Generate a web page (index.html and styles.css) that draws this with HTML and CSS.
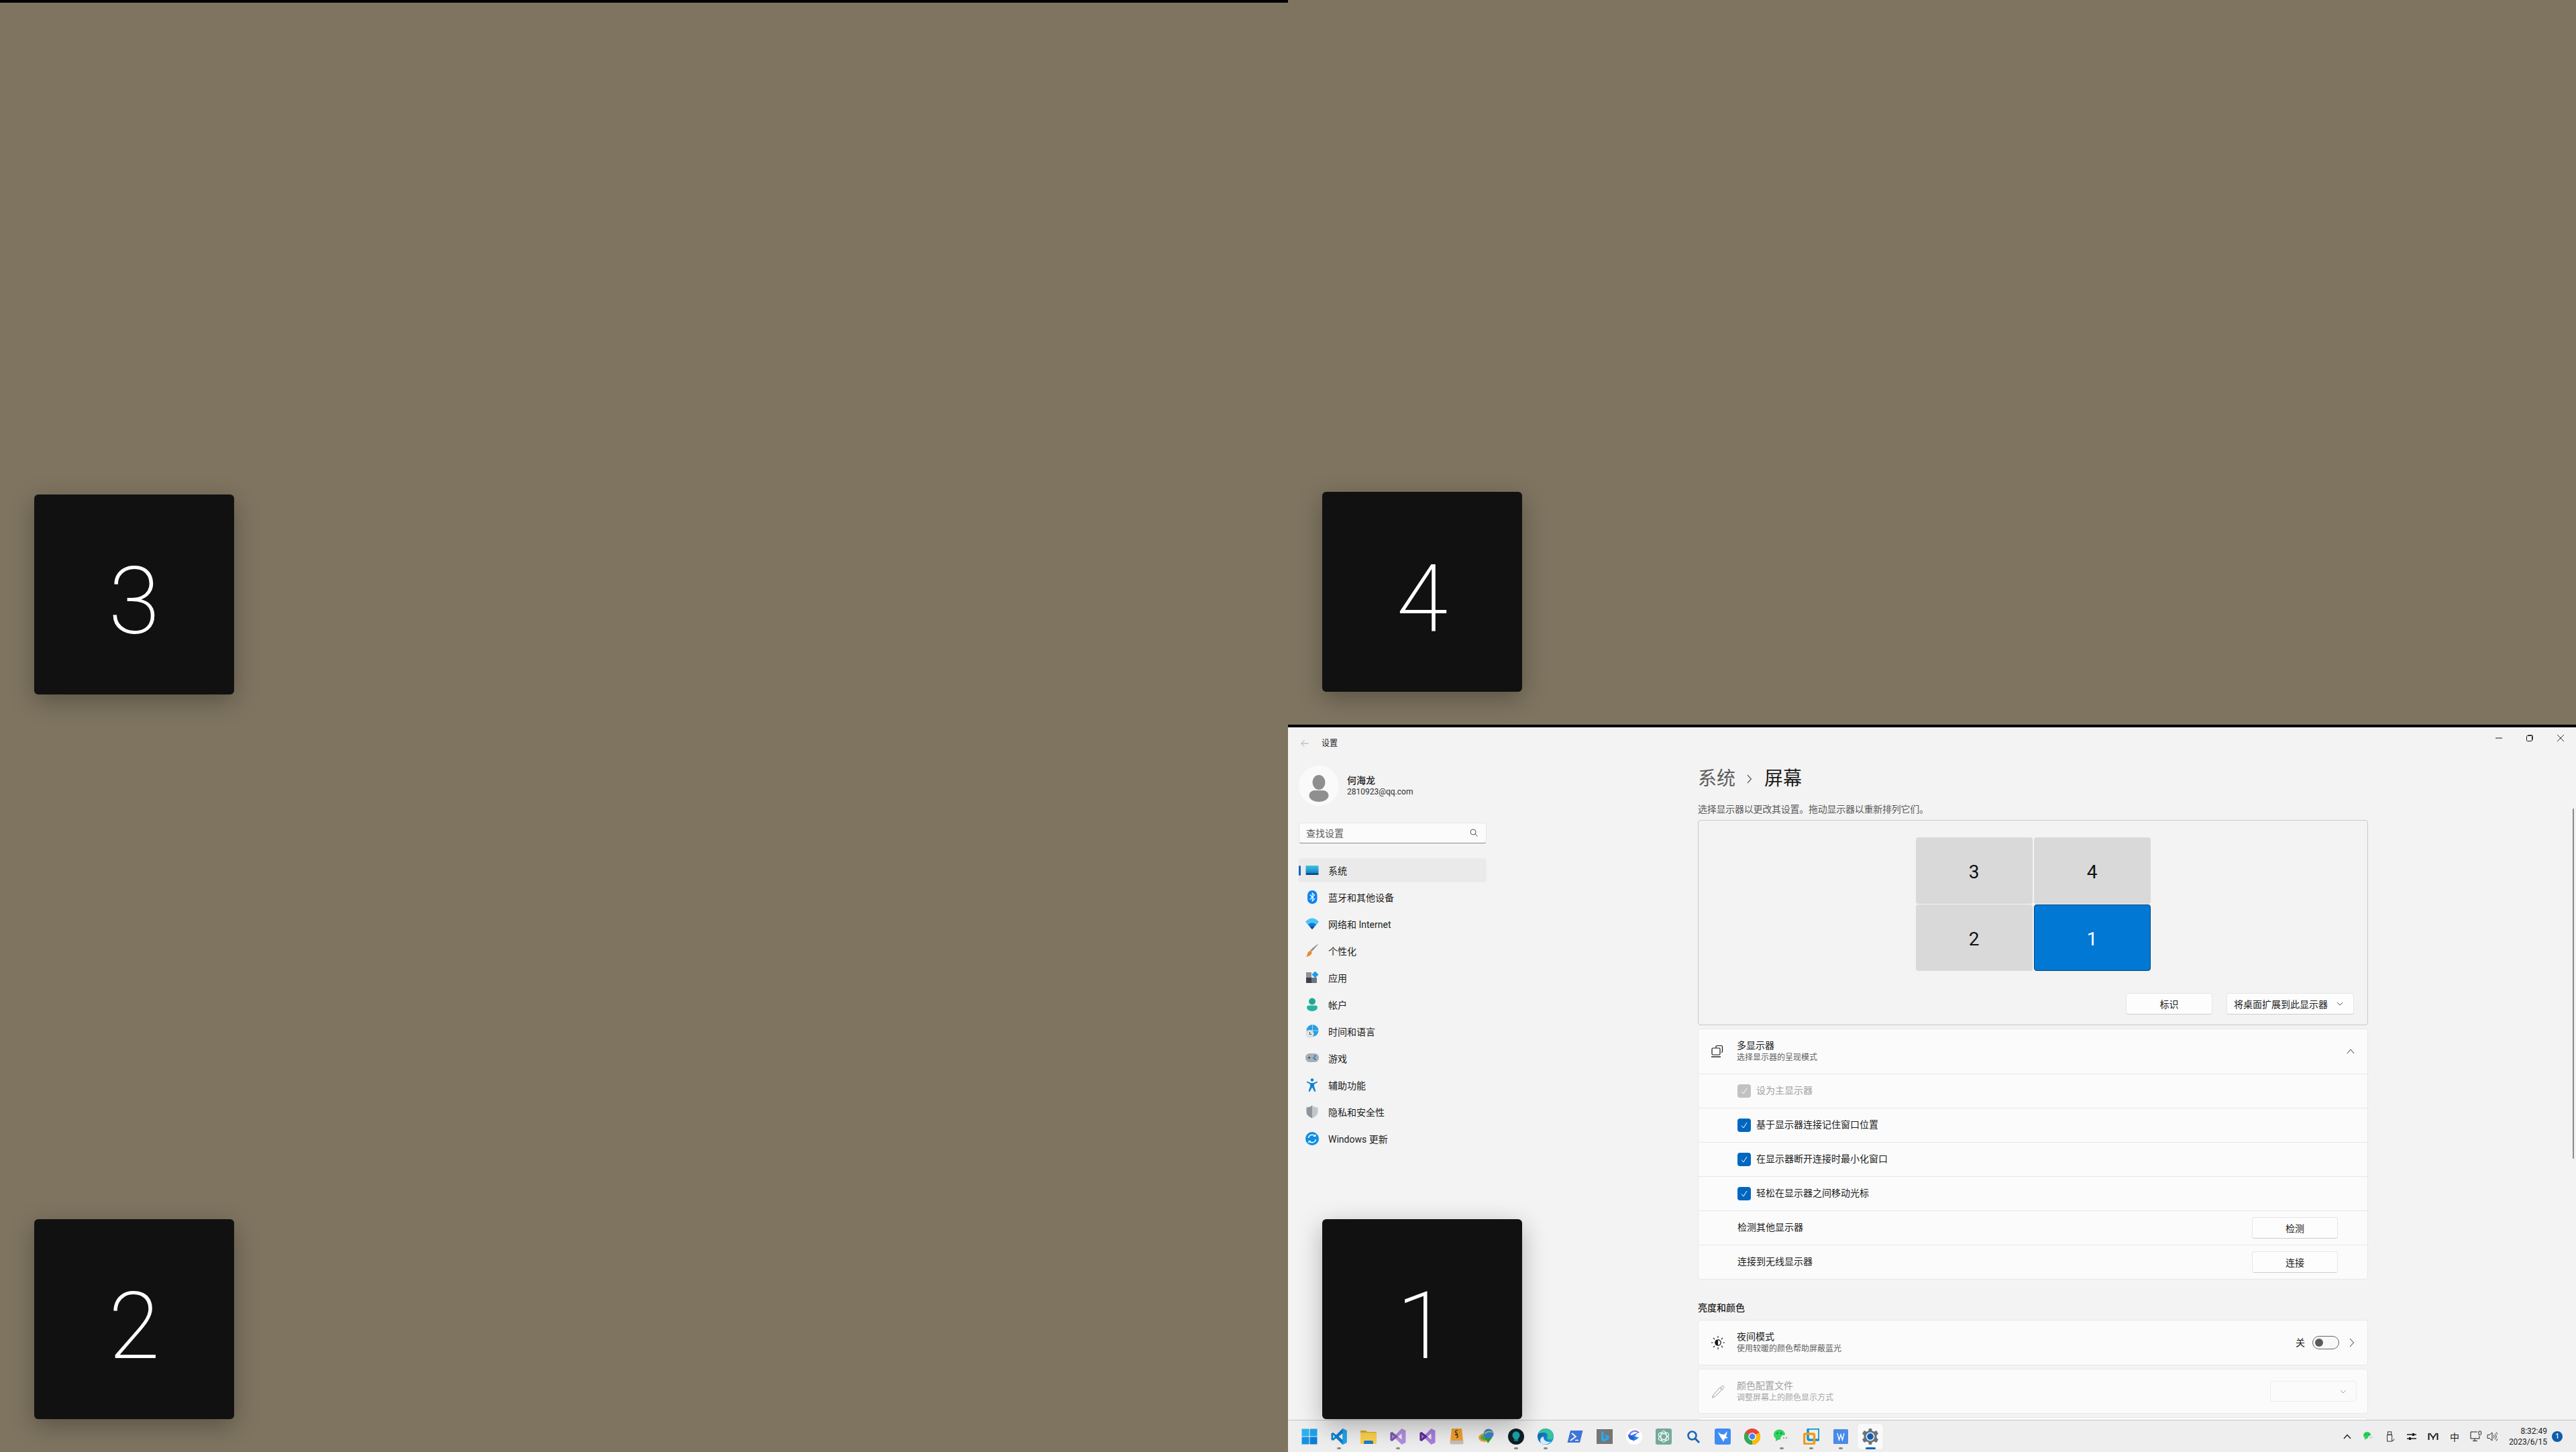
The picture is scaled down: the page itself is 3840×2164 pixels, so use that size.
FILE: index.html
```html
<!DOCTYPE html>
<html lang="zh-CN">
<head>
<meta charset="utf-8">
<title>设置</title>
<link rel="stylesheet" href="styles.css">
</head>
<body>
<div class="desktop">
  <div class="screen-left"></div>
  <div class="screen-right">
    <div class="wall-top"></div>
    <div class="window">
      <div class="titlebar">
        <svg class="back" viewBox="0 0 12 12"><path d="M11.5 6H1M5.5 1.2 .8 6l4.7 4.8" fill="none" stroke="#a8a8a8" stroke-width="1"/></svg>
        <span class="app-title">设置</span>
        <div class="controls">
          <svg viewBox="0 0 10 10"><path d="M0 5h10" stroke="#1b1b1b" stroke-width="1"/></svg>
          <svg viewBox="0 0 10 10"><rect x=".5" y="1.5" width="8" height="8" rx="1.2" fill="none" stroke="#1b1b1b"/><path d="M2.5 .5H8a1.5 1.5 0 0 1 1.5 1.5v5.5" fill="none" stroke="#1b1b1b" stroke-width=".8"/></svg>
          <svg viewBox="0 0 10 10"><path d="M0 0 10 10M10 0 0 10" stroke="#1b1b1b" stroke-width=".9"/></svg>
        </div>
      </div>
      <div class="body">
        <aside class="sidebar">
          <div class="profile">
            <div class="avatar"><svg viewBox="0 0 60 60"><ellipse cx="30" cy="25" rx="9.5" ry="11" fill="#8f8f8f"/><path d="M15.5 45c0-5 4-8 8-8h13c4 0 8 3 8 8 0 5-7 9-14.500 9S15.500 50 15.500 45z" fill="#8f8f8f"/></svg></div>
            <div class="who"><div class="name">何海龙</div><div class="mail">2810923@qq.com</div></div>
          </div>
          <div class="search"><span>查找设置</span><svg viewBox="0 0 12 12"><circle cx="5" cy="5" r="4" fill="none" stroke="#555" stroke-width="1"/><path d="M8 8l3.500 3.500" stroke="#555" stroke-width="1"/></svg></div>
          <nav class="nav">
            <div class="item active"><svg viewBox="0 0 20 20"><defs><linearGradient id="sys" x1="0" y1="0" x2="0" y2="1"><stop offset="0" stop-color="#3cc4e4"/><stop offset="1" stop-color="#1584c8"/></linearGradient></defs><rect x=".5" y="3" width="19" height="11" rx="1" fill="url(#sys)"/><path d="M.5 14h19v2a1 1 0 0 1-1 1H1.500a1 1 0 0 1-1-1z" fill="#0f4d8c"/></svg><span>系统</span></div>
            <div class="item"><svg viewBox="0 0 20 20"><rect x="3" y="0" width="14.500" height="20" rx="7" fill="#0b84f0"/><path d="M6.500 6.500 13.500 13 10.200 16V4l3.300 3L6.500 13.500" fill="none" stroke="#fff" stroke-width="1.100"/></svg><span>蓝牙和其他设备</span></div>
            <div class="item"><svg viewBox="0 0 20 20"><path d="M0 7C5-.5 15-.5 20 7l-10 11z" fill="#4fc3f7"/><path d="M3.800 11C7 7.500 13 7.500 16.200 11L10 18z" fill="#0f7ad8"/><path d="M6.800 14.500C8.500 13 11.500 13 13.200 14.500L10 18z" fill="#0a4f9e"/></svg><span>网络和 Internet</span></div>
            <div class="item"><svg viewBox="0 0 20 20"><path d="M19.500 0 9.500 11l-2.500-1.500C11 5.500 16 1 19.500 0z" fill="#8a8f96"/><path d="M7 10l2.800 1.800C9.500 15.500 5.500 19 .5 19c2.500-1.500 2-4 3-6 .6-1.400 2-2.500 3.500-3z" fill="#f08a24"/></svg><span>个性化</span></div>
            <div class="item"><svg viewBox="0 0 20 20"><rect x="1" y="2" width="8" height="8" fill="#8d939a"/><rect x="1" y="10" width="8" height="8" fill="#3c4046"/><rect x="9" y="10" width="8" height="8" fill="#6e747b"/><path d="M14.500 .5 19.500 5.500l-5 5-5-5z" fill="#1a9cf0"/></svg><span>应用</span></div>
            <div class="item"><svg viewBox="0 0 20 20"><circle cx="10" cy="5.500" r="5" fill="#21a88f"/><path d="M2 14.500c0-2 1.500-3 3-3h10c1.500 0 3 1 3 3 0 3-3.500 5.500-8 5.500s-8-2.500-8-5.500z" fill="#24b5a0"/></svg><span>帐户</span></div>
            <div class="item"><svg viewBox="0 0 20 20"><circle cx="10.500" cy="9" r="9" fill="#2a9fe0"/><path d="M1.500 9h18M10.500 0v18" stroke="#bfe6f8" stroke-width=".8"/><circle cx="6.500" cy="14" r="6" fill="#dfe0e2"/><path d="M6.500 11v3.500H9" fill="none" stroke="#444" stroke-width="1"/></svg><span>时间和语言</span></div>
            <div class="item"><svg viewBox="0 0 20 20"><rect x="0" y="3" width="20" height="13" rx="6" fill="#a9afb6"/><path d="M3.500 9.500h4M5.500 7.500v4" stroke="#444" stroke-width="1"/><circle cx="14.500" cy="6.800" r="1.200" fill="#1570c4"/><circle cx="12.500" cy="9.500" r="1.200" fill="#1570c4"/><circle cx="14.500" cy="11.800" r="1.200" fill="#1570c4"/></svg><span>游戏</span></div>
            <div class="item"><svg viewBox="0 0 20 20"><circle cx="10" cy="2.500" r="2.300" fill="#1282d6"/><path d="M2.500 4.500 8 7h4l5.500-2.500.6 1.600L13 9v3l2.500 7.500-2 .5L10 13.500 6.500 20l-2-.5L7 12V9L1.900 6.100z" fill="#1282d6"/></svg><span>辅助功能</span></div>
            <div class="item"><svg viewBox="0 0 20 20"><defs><linearGradient id="shd" x1="0" y1="0" x2="1" y2="0"><stop offset=".5" stop-color="#8f959c"/><stop offset=".5" stop-color="#c3c7cb"/></linearGradient></defs><path d="M10 .5c2.500 2 5.500 3 8.500 3v7c0 4-3.500 7-8.500 9-5-2-8.500-5-8.500-9v-7c3 0 6-1 8.500-3z" fill="url(#shd)"/></svg><span>隐私和安全性</span></div>
            <div class="item"><svg viewBox="0 0 20 20"><circle cx="10" cy="10" r="10" fill="#0f8fe0"/><path d="M4.500 9a5.600 5.600 0 0 1 10-2.500M15.500 11a5.600 5.600 0 0 1-10 2.500" fill="none" stroke="#fff" stroke-width="1.500"/><path d="M15.500 3v4h-4zM4.500 17v-4h4z" fill="#fff"/></svg><span>Windows 更新</span></div>
          </nav>
        </aside>
        <main class="main">
          <h1 class="crumb"><span class="crumb-dim">系统</span><svg viewBox="0 0 8 14"><path d="M1 1l5.500 6L1 13" fill="none" stroke="#5c5c5c" stroke-width="1.200"/></svg><span>屏幕</span></h1>
          <p class="lead">选择显示器以更改其设置。拖动显示器以重新排列它们。</p>
          <section class="arrange">
            <div class="monitors">
              <div class="mon">3</div>
              <div class="mon">4</div>
              <div class="mon">2</div>
              <div class="mon sel">1</div>
            </div>
            <div class="arr-actions">
              <button class="btn btn-id">标识</button>
              <button class="btn btn-drop"><span>将桌面扩展到此显示器</span><svg class="chev" viewBox="0 0 10 6"><path d="M1 1l4 4 4-4" fill="none" stroke="#555" stroke-width="1"/></svg></button>
            </div>
          </section>
          <section class="card">
            <div class="head">
              <svg class="ic" viewBox="0 0 20 20"><rect x="1" y="5" width="12" height="10" rx="1.500" fill="none" stroke="#1b1b1b" stroke-width="1.200"/><path d="M5 5V3a1.500 1.500 0 0 1 1.500-1.500H13A1.500 1.500 0 0 1 14.500 3v7a1.500 1.500 0 0 1-1.500 1.500" fill="none" stroke="#1b1b1b" stroke-width="1.200" transform="translate(2 0)"/><path d="M0 18h14" stroke="#1b1b1b" stroke-width="1.400"/></svg>
              <div class="txt"><div class="t1">多显示器</div><div class="t2">选择显示器的呈现模式</div></div>
              <svg class="end-chev" viewBox="0 0 12 8"><path d="M1 7l5-6 5 6" fill="none" stroke="#333" stroke-width="1"/></svg>
            </div>
            <div class="row dim"><span class="check off"><svg viewBox="0 0 12 12"><path d="M2 6.500 5 10l5-8" fill="none" stroke="#fff" stroke-width="1"/></svg></span><span>设为主显示器</span></div>
            <div class="row"><span class="check"><svg viewBox="0 0 12 12"><path d="M2 6.500 5 10l5-8" fill="none" stroke="#fff" stroke-width="1"/></svg></span><span>基于显示器连接记住窗口位置</span></div>
            <div class="row"><span class="check"><svg viewBox="0 0 12 12"><path d="M2 6.500 5 10l5-8" fill="none" stroke="#fff" stroke-width="1"/></svg></span><span>在显示器断开连接时最小化窗口</span></div>
            <div class="row"><span class="check"><svg viewBox="0 0 12 12"><path d="M2 6.500 5 10l5-8" fill="none" stroke="#fff" stroke-width="1"/></svg></span><span>轻松在显示器之间移动光标</span></div>
            <div class="row"><span>检测其他显示器</span><button class="btn btn-row">检测</button></div>
            <div class="row"><span>连接到无线显示器</span><button class="btn btn-row">连接</button></div>
          </section>
          <h2 class="section">亮度和颜色</h2>
          <section class="card solo">
            <div class="head tall">
              <svg class="ic" viewBox="0 0 20 20"><circle cx="10" cy="10" r="4.200" fill="none" stroke="#1b1b1b" stroke-width="1.300"/><path d="M10 6a4 4 0 0 0 0 8z" fill="#1b1b1b"/><path d="M10 0v3M10 17v3M0 10h2.500M17.500 10H20M3 3l2 2M15 15l2 2M3 17l2-2M15 5l2-2" stroke="#1b1b1b" stroke-width="1.100"/></svg>
              <div class="txt"><div class="t1">夜间模式</div><div class="t2">使用较暖的颜色帮助屏蔽蓝光</div></div>
              <span class="state">关</span><span class="toggle"><i></i></span>
              <svg class="end-chev right" viewBox="0 0 8 14"><path d="M1 1l5.500 6L1 13" fill="none" stroke="#333" stroke-width="1"/></svg>
            </div>
          </section>
          <section class="card solo">
            <div class="head disabled">
              <svg class="ic" viewBox="0 0 20 20"><path d="M12 5 3 15l-1.500 4 4-1.500L15 8M12 3.500l4.500 4.500M14 5.500c0-2 1.500-4 3-4s2 1.500 1.500 3-2 2-3 2" fill="none" stroke="#9a9a9a" stroke-width="1"/></svg>
              <div class="txt"><div class="t1">颜色配置文件</div><div class="t2">调整屏幕上的颜色显示方式</div></div>
              <span class="fake-drop"><svg class="chev" viewBox="0 0 10 6"><path d="M1 1l4 4 4-4" fill="none" stroke="#a0a0a0" stroke-width="1"/></svg></span>
            </div>
          </section>
          <section class="card solo next"></section>
        </main>
      </div>
      <div class="scrollbar"></div>
    </div>
    <footer class="taskbar">
      <div class="apps">
        <span class="tb"><svg viewBox="0 0 24 24"><rect x=".5" y=".5" width="11" height="11" fill="#2fb0ee"/><rect x="12.500" y=".5" width="11" height="11" fill="#1ea2ea"/><rect x=".5" y="12.500" width="11" height="11" fill="#1592e4"/><rect x="12.500" y="12.500" width="11" height="11" fill="#0b80d9"/></svg></span>
        <span class="tb run"><svg viewBox="0 0 24 24"><path fill-rule="evenodd" d="M17.500 0 23.500 3V21L17.500 24 7.800 14.500 3.200 18 .5 16.700V7.300L3.200 6 7.800 9.500ZM17.500 7 11.500 12 17.500 17ZM3.200 9.300V14.700L6 12Z" fill="#0d7fcb"/><path d="M17.500 0 23.500 3V21L17.500 24V17 7Z" fill="#24a3ea"/></svg></span>
        <span class="tb"><svg viewBox="0 0 24 24"><path d="M0 4a1 1 0 0 1 1-1h7l2 2h13a1 1 0 0 1 1 1v3H0z" fill="#dca81f"/><rect y="6" width="24" height="17" rx="1" fill="#fbd04f"/><path d="M5 23v-3a2 2 0 0 1 2-2h10a2 2 0 0 1 2 2v3z" fill="#1b7fcc"/></svg></span>
        <span class="tb run"><svg viewBox="0 0 24 24"><path fill-rule="evenodd" d="M17.500 0 23.500 3V21L17.500 24 8.500 15 3 19 .5 17.500V6.500L3 5 8.500 9ZM17.500 7.500 12 12 17.500 16.500Z" fill="#b28ee0"/><path fill-rule="evenodd" d="M.5 6.500 3 5 12 12 3 19 .5 17.500ZM3.200 9V15L7 12Z" fill="#7a5aa8"/></svg></span>
        <span class="tb"><svg viewBox="0 0 24 24"><path fill-rule="evenodd" d="M17.500 0 23.500 3V21L17.500 24 8.500 15 3 19 .5 17.500V6.500L3 5 8.500 9ZM17.500 7.500 12 12 17.500 16.500Z" fill="#a67fdc"/><path fill-rule="evenodd" d="M.5 6.500 3 5 12 12 3 19 .5 17.500ZM3.200 9V15L7 12Z" fill="#5c2d91"/></svg></span>
        <span class="tb"><svg viewBox="0 0 24 24"><path d="M4 0h15l2 18H2z" fill="#f0a030"/><rect x="1.500" y="18" width="20" height="5.500" rx="1" fill="#c0c0bc"/><path d="M13 3c-3-1-5 2-2 3.500s1 4-1 3 2-1 3 1-1 3.500-2 3" fill="none" stroke="#3a2a10" stroke-width="1.200"/></svg></span>
        <span class="tb"><svg viewBox="0 0 24 24"><ellipse cx="9" cy="13.500" rx="9" ry="6.500" fill="#e6a33c"/><ellipse cx="9" cy="13.500" rx="6" ry="4" fill="#4caf50"/><circle cx="15" cy="8" r="7.500" fill="#3b7fd0"/><path d="M9 8c2-3 8-5 12-2" fill="none" stroke="#9ccf6a" stroke-width="2"/><path d="M8 14h12l-6 8-1.500-3.500z" fill="#2f9e30"/></svg></span>
        <span class="tb run"><svg viewBox="0 0 24 24"><circle cx="12" cy="12" r="12" fill="#0f1e24"/><path d="M12 4.500c3.500 0 5.500 2.500 5.500 5.500 0 2.500-1.500 4-2.500 5v4h-1v-3h-1v3h-2v-3h-1v3H9v-4c-1-1-2.500-2.500-2.500-5 0-3 2-5.500 5.500-5.500z" fill="#17a2a8"/></svg></span>
        <span class="tb run"><svg viewBox="0 0 24 24"><defs><linearGradient id="edg" x1="0" y1="0" x2="1" y2="1"><stop offset="0" stop-color="#0c59a4"/><stop offset="1" stop-color="#1ba1e2"/></linearGradient></defs><circle cx="12" cy="12" r="12" fill="url(#edg)"/><path d="M1 8C3 2 8 0 12 0c7 0 12 5 12 11.500 0 3-2 5-5.500 5-2.500 0-4.500-1-4.500-2.500 0-1 1-1.500 1-3C15 8 12 6 9 6c-3 0-6 1-8 2z" fill="#36c3a0"/><path d="M9 12c-1 4 3 8 8 8 1 0 2-.2 3-.8A12 12 0 0 1 6 22.500C3 20 3 13 9 12z" fill="#fff" opacity=".85"/></svg></span>
        <span class="tb"><svg viewBox="0 0 24 24"><path d="M5 3h18.500L19 21H.5z" fill="#3f74d8"/><path d="M7 7l6 5-8 6M12 17.500h5" fill="none" stroke="#fff" stroke-width="1.700"/></svg></span>
        <span class="tb"><svg viewBox="0 0 24 24"><rect x="0" y="1" width="24" height="22" fill="#757575"/><path d="M7 4l3.500 1.200v10.500l5-3-2.500-1-1.200-3L18.500 11v4.500L10.500 20 7 18z" fill="#2aa8ec"/></svg></span>
        <span class="tb"><svg viewBox="0 0 24 24"><circle cx="12" cy="12" r="12" fill="#fff"/><path d="M5 12a8 8 0 0 1 14-5.500" fill="none" stroke="#8a7af0" stroke-width="2.500"/><path d="M18 6 8 10l3 3-1 6c2-1 7-3 9-6-3 0-5-1-6-2z" fill="#2f7fe8"/><path d="M3 9c0 6 4 9 8 8l1-4-4-3z" fill="#2563d0"/></svg></span>
        <span class="tb"><svg viewBox="0 0 24 24"><rect width="24" height="24" rx="3" fill="#74aa9c"/><g fill="none" stroke="#fff" stroke-width="1.100"><ellipse cx="12" cy="12" rx="4.200" ry="8.500"/><ellipse cx="12" cy="12" rx="4.200" ry="8.500" transform="rotate(60 12 12)"/><ellipse cx="12" cy="12" rx="4.200" ry="8.500" transform="rotate(120 12 12)"/></g></svg></span>
        <span class="tb"><svg viewBox="0 0 24 24"><circle cx="10.500" cy="10.500" r="6" fill="none" stroke="#1a68b8" stroke-width="2.600"/><path d="M15 15l6 6" stroke="#1a68b8" stroke-width="3"/></svg></span>
        <span class="tb"><svg viewBox="0 0 24 24"><rect width="24" height="24" rx="3" fill="#3f8cf5"/><path d="M5 5c3 3 6 4 9 4l5-5-2 8 3 2-5 1-2 5c-1-4-6-8-8-15z" fill="#fff"/></svg></span>
        <span class="tb"><svg viewBox="0 0 24 24"><circle cx="12" cy="12" r="12" fill="#ea4335"/><path d="M12 12 22.400 6A12 12 0 0 1 12 24z" fill="#fbbc05"/><path d="M12 12 12 24A12 12 0 0 1 1.600 6z" fill="#34a853"/><circle cx="12" cy="12" r="5.700" fill="#fff"/><circle cx="12" cy="12" r="4.400" fill="#4285f4"/></svg></span>
        <span class="tb run"><svg viewBox="0 0 24 24"><use href="#wechat"/></svg></span>
        <span class="tb run"><svg viewBox="0 0 24 24"><rect x="7" y="0" width="17" height="17" rx="2" fill="none" stroke="#1095d0" stroke-width="3.500"/><rect x="1.500" y="8" width="15" height="15" rx="2" fill="none" stroke="#f39a13" stroke-width="3.500"/></svg></span>
        <span class="tb run"><svg viewBox="0 0 24 24"><rect x="1" y="1" width="22" height="22" rx="1.500" fill="#4a8ae8"/><path d="M7 7l2.500 10L12 9l2.500 8L17 7" fill="none" stroke="#fff" stroke-width="1.300"/></svg></span>
        <span class="tb current"><svg viewBox="0 0 24 24"><path d="M10 0h4l.8 3.500 2.800 1.200L21 3l3 4.500-2.500 2.500v4l2.500 2.500-3 4.500-3.400-1.700-2.800 1.200L14 24h-4l-.8-3.500-2.800-1.200L3 21 0 16.500 2.500 14v-4L0 7.500 3 3l3.400 1.700 2.800-1.200z" fill="#68727c"/><circle cx="12" cy="12" r="6.500" fill="#dfe6ee"/><circle cx="12" cy="12" r="4.700" fill="#0f5eb0"/></svg></span>
      </div>
      <div class="tray">
        <span class="slot"><svg class="s12" viewBox="0 0 12 8"><path d="M1 7l5-5.500L11 7" fill="none" stroke="#1b1b1b" stroke-width="1.300"/></svg></span>
        <span class="slot"><svg class="s16" viewBox="0 0 24 24"><use href="#wechat"/></svg></span>
        <span class="slot"><svg class="s16" viewBox="0 0 16 18"><rect x="4" y="1" width="6" height="5" fill="none" stroke="#1b1b1b"/><path d="M3 6h8v11H3zM11 15l1.500 1.500L15 13" fill="none" stroke="#1b1b1b"/></svg></span>
        <span class="slot"><svg class="s16" viewBox="0 0 16 14"><path d="M1 4h14M1 10h14" stroke="#1b1b1b" stroke-width="1.300"/><rect x="9" y="2" width="3" height="4" fill="#1b1b1b"/><rect x="4" y="8" width="3" height="4" fill="#1b1b1b"/></svg></span>
        <span class="slot"><svg class="s16" viewBox="0 0 16 12"><path d="M1.500 1v10M14.500 1v10" stroke="#1b1b1b" stroke-width="2"/><path d="M3 1l5 7 5-7" fill="none" stroke="#1b1b1b" stroke-width="1.800"/><path d="M8 7v4" stroke="#1b1b1b" stroke-width="1.500"/></svg></span>
        <span class="slot cn">中</span>
        <span class="slot"><svg class="s18" viewBox="0 0 18 18"><path d="M11 2H1v10h13V8M7 12v3M4 15.500h7" fill="none" stroke="#1b1b1b"/><rect x="13" y="1" width="3.500" height="5.500" rx="1" fill="none" stroke="#1b1b1b"/></svg></span>
        <span class="slot slot-s"><svg class="s16" viewBox="0 0 16 16"><path d="M1 5.500h3L8 2v12L4 10.500H1z" fill="none" stroke="#1b1b1b" stroke-width=".9"/><path d="M10 5.500a3.500 3.500 0 0 1 0 5M12 3.500a6 6 0 0 1 0 9M14 1.500a9 9 0 0 1 0 13" fill="none" stroke="#1b1b1b" stroke-width=".9"/></svg></span>
        <div class="clock"><div>8:32:49</div><div>2023/6/15</div></div>
        <span class="badge">1</span>
      </div>
    </footer>
  </div>
  <div class="fly fly-3">3</div>
  <div class="fly fly-4">4</div>
  <div class="fly fly-2">2</div>
  <div class="fly fly-1">1</div>
  <svg class="defs" viewBox="0 0 24 24"><defs><g id="wechat"><ellipse cx="8.500" cy="9" rx="8.500" ry="7.500" fill="#2ed15f"/><path d="M3 14l0 5 5-3z" fill="#2ed15f"/><circle cx="5.500" cy="7" r="1.100" fill="#0b6b2c"/><circle cx="11" cy="7" r="1.100" fill="#0b6b2c"/><ellipse cx="17" cy="15" rx="7" ry="5.500" fill="#ececec"/><circle cx="15" cy="14" r=".9" fill="#777"/><circle cx="19" cy="14" r=".9" fill="#777"/></g></defs></svg>
</div>
</body>
</html>
```

FILE: styles.css
```css
* { box-sizing: border-box; }
html, body { margin: 0; padding: 0; background: #7e7460; overflow: hidden; }
body { font-family: Roboto, "Noto Sans CJK SC", sans-serif; color: #1b1b1b; font-size: 14px; }
button { font: inherit; color: inherit; padding: 0; }
h1, h2, p { margin: 0; font-weight: 400; }
svg { display: block; flex: none; }

.desktop { position: relative; width: 3840px; height: 2164px; display: grid; grid-template-columns: 1920px 1920px; grid-template-rows: 2164px; }
.screen-left { background: #7e7460; border-top: 4px solid #000; }
.screen-right { display: flex; flex-direction: column; min-height: 0; height: 2164px; }
.wall-top { height: 1080px; flex: none; background: #7e7460; }

.window { position: relative; flex: 1; min-height: 0; background: #f3f3f3; border-top: 4px solid #000; overflow: hidden; display: flex; flex-direction: column; }
.titlebar { height: 48px; flex: none; display: flex; align-items: center; padding-left: 19px; }
.back { width: 12px; height: 12px; }
.app-title { margin-left: 19px; font-size: 12px; line-height: 16px; }
.controls { margin-left: auto; align-self: flex-start; margin-top: 11px; display: flex; gap: 36px; padding-right: 18px; }
.controls svg { width: 10px; height: 10px; }

.body { flex: 1; min-height: 0; display: flex; overflow: hidden; }
.sidebar { width: 611px; flex: none; padding: 9px 0 0 16px; }
.profile { display: flex; align-items: center; gap: 12px; height: 60px; }
.avatar { width: 60px; height: 60px; border-radius: 50%; background: #fafafa; }
.avatar svg { width: 60px; height: 60px; }
.who { padding-top: 1px; }
.name { font-size: 14px; line-height: 18px; font-weight: 500; }
.mail { font-size: 12px; line-height: 17px; color: #303030; }
.search { width: 280px; height: 31px; margin-top: 25px; padding: 0 12px 2px 10px; display: flex; align-items: center; justify-content: space-between; background: #fbfbfb; border: 1px solid #e6e6e6; border-bottom-color: #8c8c8c; border-radius: 4px; color: #5d5d5d; }
.search svg { width: 12px; height: 12px; }
.nav { margin-top: 22px; width: 280px; display: flex; flex-direction: column; gap: 4px; }
.item { position: relative; height: 36px; display: flex; align-items: center; gap: 14px; padding-left: 10px; border-radius: 4px; line-height: 20px; }
.item span { position: relative; top: 1px; }
.item svg { width: 20px; height: 20px; }
.item.active { background: #eaeaea; }
.item.active::before { content: ""; position: absolute; left: 0; top: 11px; width: 3px; height: 15px; border-radius: 2px; background: #0067c0; }

.main { width: 999px; flex: none; padding-top: 9px; }
.crumb { display: flex; align-items: center; height: 40px; font-size: 28px; line-height: 40px; }
.crumb-dim { color: #5c5c5c; }
.crumb svg { width: 8px; height: 14px; margin: 0 18px 0 17px; }
.lead { margin-top: 15px; line-height: 20px; color: #5c5c5c; letter-spacing: -.25px; }

.arrange { margin-top: 6px; height: 306px; border: 1px solid #c9c9c9; border-radius: 4px; background: #f3f3f3; padding: 25px 20px 0; display: flex; flex-direction: column; }
.monitors { align-self: center; display: grid; grid-template-columns: 174px 174px; grid-auto-rows: 99px; column-gap: 2px; row-gap: 1px; }
.mon { background: #d9d9d9; border-radius: 4px; display: flex; align-items: center; justify-content: center; padding-top: 4px; font-size: 28px; font-weight: 400; color: #111; }
.mon.sel { background: #0078d4; border: 1px solid #00477d; color: #fff; }
.arr-actions { margin-top: 33px; display: flex; justify-content: flex-end; gap: 21px; }
.btn { height: 32px; background: #fdfdfd; border: 1px solid #e6e6e6; border-bottom-color: #cdcdcd; border-radius: 4px; display: inline-flex; align-items: center; justify-content: center; }
.btn-id { width: 129px; }
.btn-drop { width: 190px; justify-content: space-between; padding: 0 15px 0 10px; }
.chev { width: 10px; height: 6px; }

.card { margin-top: 5px; background: #fbfbfb; border: 1px solid #e8e8e8; border-radius: 4px; }
.head { height: 66px; display: flex; align-items: center; padding-left: 19px; padding-right: 19px; }
.head .ic { width: 20px; height: 20px; }
.txt { margin-left: 18px; }
.t1 { line-height: 18px; }
.t2 { font-size: 12px; line-height: 18px; color: #5f5f5f; }
.end-chev { margin-left: auto; width: 12px; height: 8px; }
.end-chev.right { margin-left: 15px; width: 8px; height: 14px; }
.row { height: 51px; display: flex; align-items: center; padding: 0 44px 0 58px; border-top: 1px solid #e8e8e8; }
.row > span:not(.check) { line-height: 20px; padding-bottom: 2px; }
.row .btn-row { margin-left: auto; width: 128px; height: 32px; }
.check { width: 20px; height: 20px; border-radius: 4px; background: #0067c0; margin-right: 8px; display: flex; align-items: center; justify-content: center; }
.check svg { width: 12px; height: 12px; }
.check.off { background: #c2c2c2; }
.row.dim { color: #a0a0a0; }
.section { margin-top: 32px; margin-bottom: 8px; font-size: 14px; line-height: 20px; font-weight: 500; }
.solo { margin-top: 5px; }
.section + .solo { margin-top: 0; }
.state { margin-left: auto; line-height: 20px; }
.toggle { width: 40px; height: 20px; margin-left: 11px; border: 1px solid #666; border-radius: 10px; background: #f8f8f8; display: flex; align-items: center; padding-left: 3px; }
.toggle i { width: 12px; height: 12px; border-radius: 50%; background: #5a5a5a; }
.disabled { height: 65px; }
.disabled .t1 { color: #a0a0a0; }
.disabled .t2 { color: #a6a6a6; }
.fake-drop { margin-left: auto; margin-right: -3px; width: 129px; height: 31px; border: 1px solid #ececec; border-radius: 4px; display: flex; align-items: center; justify-content: flex-end; padding-right: 14px; }
.next { height: 40px; }

.scrollbar { position: absolute; right: 3px; top: 121px; width: 2px; height: 522px; background: #8a8a8a; border-radius: 1px; }

.taskbar { height: 48px; flex: none; background: #eeeeee; border-top: 1px solid #c4c4c4; display: flex; align-items: center; padding: 0 20px 0 10px; position: relative; }
.apps { display: flex; }
.tb { position: relative; width: 44px; height: 38px; display: flex; align-items: center; justify-content: center; }
.tb svg { width: 24px; height: 24px; }
.run::after { content: ""; position: absolute; left: 19px; bottom: 0; width: 6px; height: 3px; border-radius: 2px; background: #8a8a8a; }
.current::before { content: ""; position: absolute; left: 3px; top: 0; width: 38px; height: 38px; background: #f9f9f9; border-radius: 4px; box-shadow: 0 0 1px rgba(0,0,0,.2); }
.current svg { position: relative; }
.current::after { content: ""; position: absolute; left: 15px; bottom: 0; width: 15px; height: 3px; border-radius: 2px; background: #0067c0; }

.tray { margin-left: auto; display: flex; align-items: center; }
.slot { width: 32px; height: 24px; display: flex; align-items: center; justify-content: center; }
.slot-s { width: 16px; }
.cn { font-size: 14px; }
.s12 { width: 12px; height: 8px; }
.s16 { width: 16px; height: 16px; }
.s18 { width: 18px; height: 18px; }
.clock { margin-left: 17px; text-align: right; font-size: 12px; line-height: 16px; }
.badge { width: 16px; height: 16px; margin-left: 7px; border-radius: 50%; background: #0b5cad; color: #fff; font-size: 10px; line-height: 16px; text-align: center; font-weight: 500; }

.fly { position: absolute; width: 298px; height: 298px; background: #111; border-radius: 6px; color: #fff; display: flex; align-items: center; justify-content: center; padding-top: 20px; font-family: Roboto, sans-serif; font-weight: 200; font-size: 139px; line-height: 1; box-shadow: 0 10px 36px rgba(0,0,0,.28); }
.fly-3 { left: 51px; top: 737px; }
.fly-4 { left: 1971px; top: 733px; }
.fly-2 { left: 51px; top: 1817px; }
.fly-1 { left: 1971px; top: 1817px; }
.defs { position: absolute; width: 0; height: 0; }
```
